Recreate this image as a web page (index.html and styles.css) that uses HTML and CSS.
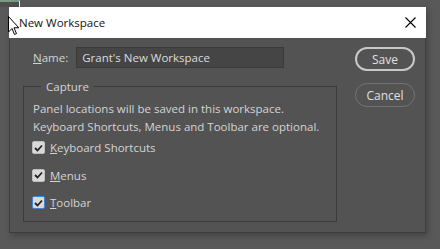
FILE: index.html
```html
<!DOCTYPE html>
<html lang="en">
<head>
    <meta charset="UTF-8">
    <title>New Workspace</title>
    <link rel="stylesheet" href="styles.css">
</head>
<body>
    <div class="backdrop">
        <div class="corner"></div>
    </div>

    <div class="dialog">
        <div class="titlebar">
            <span class="title">New Workspace</span>
            <svg class="close" width="11" height="11" viewBox="0 0 11 11">
                <path d="M0.5 0.5 L10.5 10.5 M10.5 0.5 L0.5 10.5" stroke="#000" stroke-width="1.1" fill="none"/>
            </svg>
        </div>

        <div class="content">
            <div class="main">
                <div class="name-row">
                    <label class="name-label"><u>N</u>ame:</label>
                    <input class="name-input" type="text" value="Grant's New Workspace">
                </div>

                <fieldset class="capture">
                    <legend>Capture</legend>
                    <p class="hint">Panel locations will be saved in this workspace.<br>
                    Keyboard Shortcuts, Menus and Toolbar are optional.</p>

                    <label class="check-row">
                        <span class="box"><svg width="9" height="8" viewBox="0 0 9 8"><path d="M1 4 L3.5 6.5 L8 1.5" stroke="#222" stroke-width="1.8" fill="none"/></svg></span>
                        <span><u>K</u>eyboard Shortcuts</span>
                    </label>
                    <label class="check-row">
                        <span class="box"><svg width="9" height="8" viewBox="0 0 9 8"><path d="M1 4 L3.5 6.5 L8 1.5" stroke="#222" stroke-width="1.8" fill="none"/></svg></span>
                        <span><u>M</u>enus</span>
                    </label>
                    <label class="check-row">
                        <span class="box focused"><svg width="9" height="8" viewBox="0 0 9 8"><path d="M1 4 L3.5 6.5 L8 1.5" stroke="#222" stroke-width="1.8" fill="none"/></svg></span>
                        <span><u>T</u>oolbar</span>
                    </label>
                </fieldset>
            </div>

            <div class="buttons">
                <button class="btn primary">Save</button>
                <button class="btn">Cancel</button>
            </div>
        </div>
    </div>

    <svg class="cursor" width="12" height="20" viewBox="0 0 12 20">
        <path d="M0.5 0.5 L0.5 16 L4 12.5 L6.5 18.5 L8.5 17.6 L6 11.8 L10.8 11.8 Z" fill="#fff" stroke="#000" stroke-width="1"/>
    </svg>
</body>
</html>
```

FILE: styles.css
```css
body {
    margin: 0;
    width: 440px;
    height: 249px;
    overflow: hidden;
    background-color: #595959;
    font-family: 'Open Sans', 'Noto Sans', sans-serif;
    font-size: 11.5px;
    color: #d4d4d4;
    position: relative;
}
.backdrop {
    height: 7px;
}
.corner {
    width: 20px;
    height: 7px;
    box-sizing: border-box;
    background-color: #4f4f4f;
    border-top: 2px solid #7a9a84;
    border-right: 1px solid #f2f2f2;
}
.dialog {
    margin-left: 9px;
    width: 417px;
    height: 226px;
    background-color: #535353;
    border: 1px solid #3e3e3e;
    border-top: none;
    box-sizing: border-box;
    box-shadow: 2px 3px 6px rgba(0,0,0,0.25);
}
.titlebar {
    height: 31px;
    background-color: #fff;
    display: flex;
    align-items: center;
    justify-content: space-between;
    padding: 0 10px 0 10px;
    margin-left: -1px;
    margin-right: -1px;
}
.title {
    color: #111;
}
.content {
    display: flex;
    padding: 9px 10px 0 13px;
}
.main {
    flex: 1;
}
.name-row {
    display: flex;
    align-items: center;
    gap: 8px;
    padding-left: 10px;
}
.name-input {
    width: 208px;
    height: 21px;
    box-sizing: border-box;
    background-color: #454545;
    border: 1px solid #3a3a3a;
    color: #dcdcdc;
    font-family: inherit;
    font-size: 11.5px;
    padding: 0 5px;
    outline: none;
}
.capture {
    margin: 11px 0 0 0;
    width: 314px;
    height: 143px;
    box-sizing: border-box;
    border: 1px solid #3c3c3c;
    padding: 0 9px 0 8px;
}
.capture legend {
    padding: 0 5px;
    margin-left: 9px;
}
.hint {
    margin: 6px 0 -2px 1px;
    line-height: 18px;
}
.check-row {
    display: flex;
    align-items: center;
    gap: 5px;
    height: 27.5px;
}
.box {
    width: 11px;
    height: 11px;
    background-color: #d9d9d9;
    border: 1px solid #bdbdbd;
    border-radius: 2px;
    display: flex;
    align-items: center;
    justify-content: center;
}
.box.focused {
    border-color: #3f84d6;
}
.buttons {
    display: flex;
    flex-direction: column;
    gap: 12px;
}
.btn {
    width: 60px;
    height: 24px;
    border-radius: 12px;
    background: transparent;
    border: 1px solid #737373;
    color: #e0e0e0;
    font-family: inherit;
    font-size: 12px;
    padding: 0;
}
.btn.primary {
    border: 2px solid #c8c8c8;
}
.cursor {
    position: absolute;
    left: 8px;
    top: 16px;
}
```
